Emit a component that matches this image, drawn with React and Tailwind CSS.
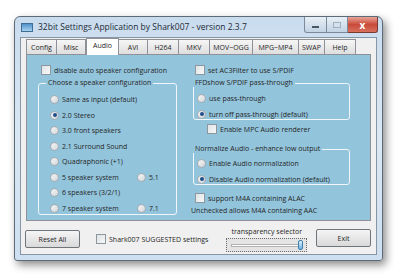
import React from "react"

const font = { fontFamily: '"Open Sans", "Liberation Sans", sans-serif' }

const tabs = [
  { name: "Config", w: "w-[31px]" },
  { name: "Misc", w: "w-[30px]" },
  { name: "Audio", w: "w-[33px]", active: true },
  { name: "AVI", w: "w-[30px]" },
  { name: "H264", w: "w-[32px]" },
  { name: "MKV", w: "w-[32px]" },
  { name: "MOV~OGG", w: "w-[44px]" },
  { name: "MPG~MP4", w: "w-[47px]" },
  { name: "SWAP", w: "w-[27px]" },
  { name: "Help", w: "w-[32px]" },
]

const Radio = ({ checked }) => (
  <span className="relative flex items-center justify-center w-[9px] h-[9px] shrink-0 rounded-full border border-[#a3abb2] bg-gradient-to-br from-[#f6f6f6] to-[#d3d7db]">
    {checked && <span className="w-[4px] h-[4px] rounded-full bg-[#1f4f8a]" />}
  </span>
)

const Check = () => (
  <span className="w-[10px] h-[10px] shrink-0 border border-[#8f979e] bg-gradient-to-br from-[#dfe3e6] to-[#f7f7f7]" />
)

const RadioRow = ({ label, checked, className = "" }) => (
  <div className={`flex items-center gap-[3px] h-[15.5px] ${className}`}>
    <Radio checked={checked} />
    <span>{label}</span>
  </div>
)

const CheckRow = ({ label, className = "" }) => (
  <div className={`flex items-center gap-[3px] ${className}`}>
    <Check />
    <span>{label}</span>
  </div>
)

const Group = ({ title, className = "", children }) => (
  <fieldset className={`border border-[#eef6fa] rounded-[3px] px-[7px] ${className}`}>
    <legend className="px-[2px] ml-[-4px] leading-[8px]">{title}</legend>
    {children}
  </fieldset>
)

const App = () => (
  <div className="w-[400px] h-[278px] bg-white overflow-hidden text-[#262626]" style={font}>
    <div className="ml-[14px] mt-[16px] w-[369px] h-[245px] rounded-t-[6px] rounded-b-[3px] border border-[#5d6b79] bg-gradient-to-b from-[#c9dcee] via-[#dbe8f4] to-[#cddff0] shadow-[3px_4px_8px_rgba(0,0,0,0.45)] flex flex-col">
      {/* title bar */}
      <div className="h-[20px] flex items-start shrink-0">
        <div className="flex items-center mt-[5px] ml-[6px] gap-[5px]">
          <span className="w-[12px] h-[9px] border border-[#3d6f99] bg-gradient-to-b from-[#4f93c9] to-[#a9d1ee]" />
          <span className="text-[8.5px] leading-[10px] text-[#1e2a36]">32bit Settings Application by Shark007 - version 2.3.7</span>
        </div>
        <div className="ml-auto mr-[4px] flex">
          <div className="w-[23px] h-[16px] border border-[#7b8a9a] border-t-0 rounded-bl-[3px] bg-gradient-to-b from-[#e8eff6] to-[#c3d3e3] flex items-center justify-center">
            <span className="w-[7px] h-[2px] bg-[#4a5866] mt-[4px]" />
          </div>
          <div className="w-[21px] h-[16px] border border-l-0 border-[#7b8a9a] border-t-0 bg-gradient-to-b from-[#e8eff6] to-[#c3d3e3] flex items-center justify-center">
            <span className="w-[8px] h-[6px] border border-[#9fb0c0]" />
          </div>
          <div className="w-[30px] h-[16px] border border-l-0 border-[#7a3a30] border-t-0 rounded-br-[3px] bg-gradient-to-b from-[#e8a497] via-[#c9493a] to-[#d7705c] flex items-center justify-center text-white text-[10px] font-bold leading-none">
            x
          </div>
        </div>
      </div>
      {/* client */}
      <div className="flex-1 mx-[5px] mb-[5px] border border-[#8796a5] bg-[#f0f0f0] flex flex-col px-[5px] text-[7px] leading-[9px]">
        <div className="flex items-end h-[16px] shrink-0">
          {tabs.map(t => (
            <div
              key={t.name}
              className={`${t.w} flex items-center justify-center border border-[#8e9298] ${t.active ? "h-[17px] bg-white border-b-0 relative top-[1px] z-10 pb-[3px]" : "h-[15px] bg-gradient-to-b from-[#f6f6f6] to-[#dedede] -ml-[1px] first:ml-0 border-b-0"}`}
            >
              {t.name}
            </div>
          ))}
        </div>
        <div className="h-[167px] border border-[#8e9298] bg-[#92c4dc] shrink-0 flex px-[11px] pt-[10px] gap-[16px]">
          <div className="w-[139px] flex flex-col">
            <CheckRow label="disable auto speaker configuration" className="ml-[3px] h-[10px]" />
            <Group title="Choose a speaker configuration" className="mt-[4px] h-[136px] pt-[5px] pl-[11px]">
              <RadioRow label="Same as input (default)" />
              <RadioRow label="2.0 Stereo" checked />
              <RadioRow label="3.0 front speakers" />
              <RadioRow label="2.1 Surround Sound" />
              <RadioRow label="Quadraphonic (+1)" />
              <div className="flex">
                <RadioRow label="5 speaker system" className="w-[87px]" />
                <RadioRow label="5.1" />
              </div>
              <RadioRow label="6 speakers (3/2/1)" />
              <div className="flex">
                <RadioRow label="7 speaker system" className="w-[87px]" />
                <RadioRow label="7.1" />
              </div>
            </Group>
          </div>
          <div className="w-[157px] flex flex-col">
            <CheckRow label="set AC3Filter to use S/PDIF" className="h-[10px] ml-[2px]" />
            <Group title="FFDshow S/PDIF pass-through" className="mt-[4px] h-[41px] pt-[4px] pl-[3px]">
              <RadioRow label="use pass-through" />
              <RadioRow label="turn off pass-through (default)" checked />
            </Group>
            <CheckRow label="Enable MPC Audio renderer" className="mt-[4px] ml-[14px] h-[10px]" />
            <Group title="Normalize Audio - enhance low output" className="mt-[11px] h-[40px] pt-[3px] pl-[3px]">
              <RadioRow label="Enable Audio normalization" className="h-[14px]" />
              <RadioRow label="Disable Audio normalization (default)" checked className="h-[14px]" />
            </Group>
            <CheckRow label="support M4A containing ALAC" className="mt-[8px] ml-[2px] h-[10px]" />
            <div className="mt-[3px] -ml-[2px]">Unchecked allows M4A containing AAC</div>
          </div>
        </div>
        {/* bottom */}
        <div className="flex items-start pt-[8px]">
          <div className="w-[55px] h-[18px] mt-[1px] -ml-[1px] border border-[#70757a] rounded-[2px] bg-gradient-to-b from-[#f5f5f5] to-[#d9d9d9] flex items-center justify-center">Reset All</div>
          <CheckRow label="Shark007 SUGGESTED settings" className="ml-[16px] mt-[5px]" />
          <div className="ml-[18px] flex flex-col items-center">
            <span className="-mt-[2px]">transparency selector</span>
            <div className="mt-[2px] w-[81px] h-[14px] border border-dotted border-[#6b6b6b] bg-[#e4e4e4] flex items-center px-[4px]">
              <div className="relative flex-1 h-[3px] border border-[#b0b0b0] bg-white">
                <span className="absolute right-[-2px] top-[-5px] w-[5px] h-[10px] rounded-[2px] border border-[#3c7fb1] bg-gradient-to-b from-[#dff0fb] to-[#6fb2e0]" />
              </div>
            </div>
          </div>
          <div className="ml-auto w-[55px] h-[18px] border border-[#70757a] rounded-[2px] bg-gradient-to-b from-[#f5f5f5] to-[#d9d9d9] flex items-center justify-center">Exit</div>
        </div>
      </div>
    </div>
  </div>
)

export default App
